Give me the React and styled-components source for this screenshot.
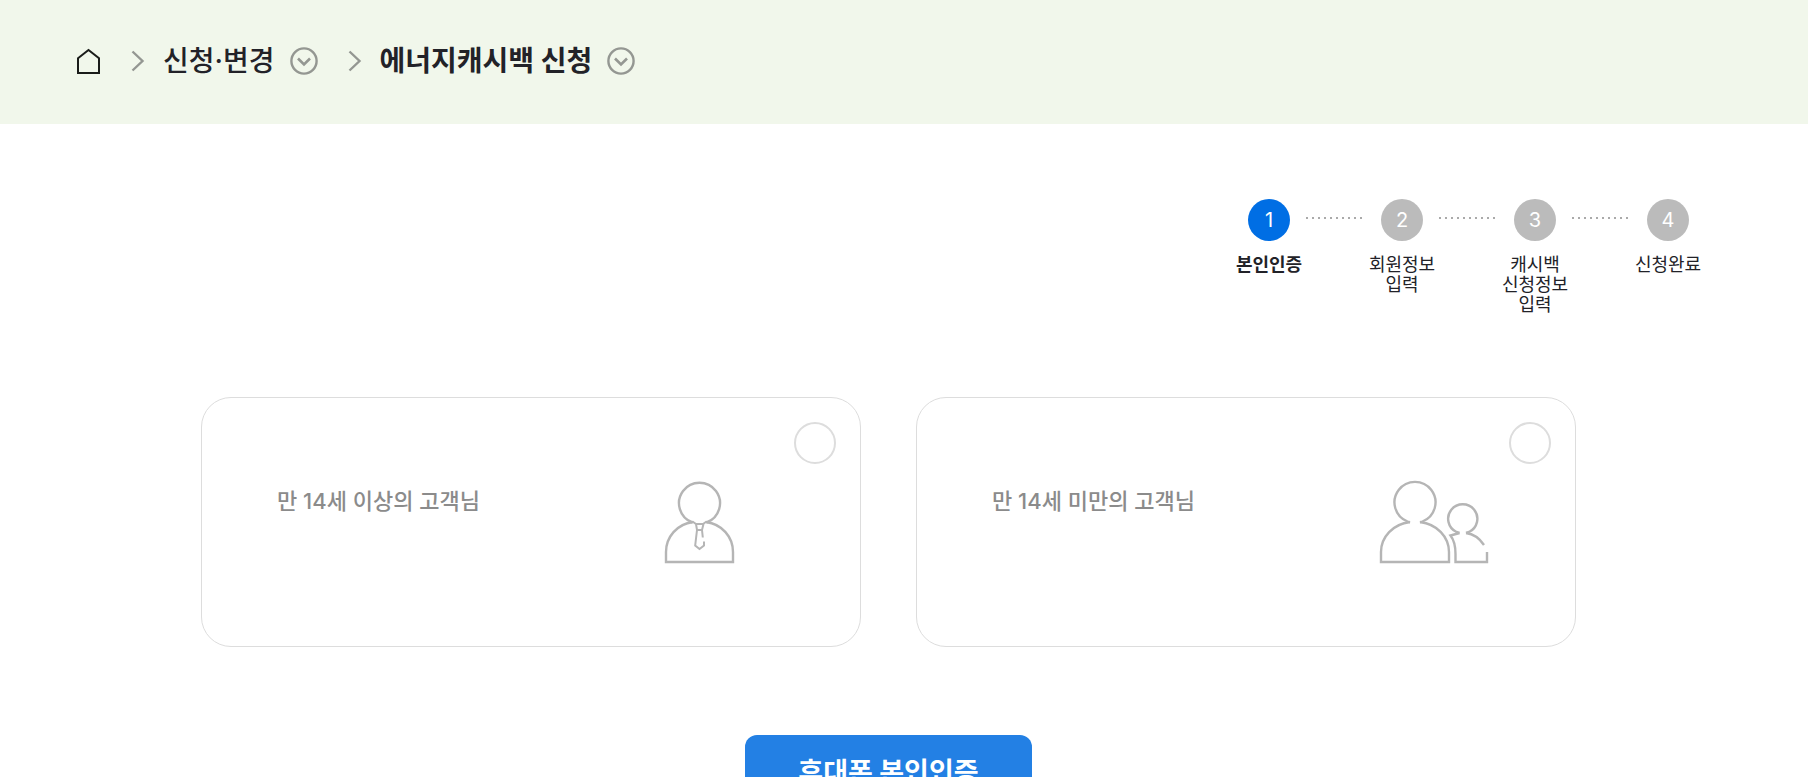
import React, { useState } from 'react'
import styled, { createGlobalStyle, css } from 'styled-components'

const steps = ['본인인증', '회원정보 입력', '캐시백 신청정보 입력', '신청완료']

const HomeIcon = () => (
  <svg width="25" height="27" viewBox="0 0 25 27" fill="none" stroke="#1a1c19" strokeWidth="2">
    <path d="M2 10.2 12.5 2 23 10.2V25H2Z" />
  </svg>
)

const ArrowIcon = () => (
  <svg width="14" height="22" viewBox="0 0 14 22" fill="none" stroke="#949792" strokeWidth="2.4">
    <path d="M1.5 1.5 11.5 11 1.5 20.5" />
  </svg>
)

const OpenIcon = () => (
  <svg width="28" height="28" viewBox="0 0 28 28" fill="none" stroke="#949792" strokeWidth="2.4">
    <circle cx="14" cy="14" r="12.6" />
    <path d="M8 11.5 14 17.5 20 11.5" strokeWidth="2.6" />
  </svg>
)

const AdultIcon = () => (
  <svg width="110" height="84" viewBox="0 0 110 84" fill="none" stroke="#b5b5b5" strokeWidth="2.4">
    <path d="M28.5 42.5A20.5 20.5 0 1 1 42.5 42.5" />
    <path d="M29 42C13 44 2 57 2 72V82H69V72C69 57 58 44 42 42" />
    <path d="M28.5 41.5 32 44H39L42.500 41.500M32 44 33 50H38L39.500 44M33 50 31.200 65.500 35.500 69 40 65.500V61.500M38 50 38.800 57.500" strokeWidth="2" />
  </svg>
)

const FamilyIcon = () => (
  <svg width="110" height="84" viewBox="0 0 110 84" fill="none" stroke="#b5b5b5" strokeWidth="2.4">
    <path d="M31 42.500 28.500 41.500A20.500 20.500 0 1 1 43.500 41.500L41 42.500" />
    <path d="M31 42C14 44 2 57 2 72V82H70V72C70 57 58 44 41 42" />
    <path d="M80.500 53 77.500 52A14.600 14.600 0 1 1 90 52L87 53" />
    <path d="M80.500 53 71.500 55.500C75 60 76.500 66 76.500 74V82H108V72M87 53C95 54 101 59 105 65" />
  </svg>
)

const customers = [
  { id: 'over14', text: '만 14세 이상의 고객님', Icon: AdultIcon },
  { id: 'under14', text: '만 14세 미만의 고객님', Icon: FamilyIcon },
]

export default function App() {
  const [customer, setCustomer] = useState('')

  return (
    <>
      <GlobalStyle />
      <Header>
        <Breadcrumb aria-label="breadcrumb">
          <HomeLink href="#" aria-label="홈">
            <HomeIcon />
          </HomeLink>
          <Crumb>
            <ArrowIcon />
            <CrumbButton type="button">
              신청·변경
              <OpenIcon />
            </CrumbButton>
          </Crumb>
          <Crumb>
            <ArrowIcon />
            <CrumbButton type="button" $current>
              에너지캐시백 신청
              <OpenIcon />
            </CrumbButton>
          </Crumb>
        </Breadcrumb>
      </Header>

      <Main>
        <Steps>
          {steps.map((label, i) => (
            <Step key={label} $active={i === 0}>
              <StepNumber $active={i === 0}>{i + 1}</StepNumber>
              <StepLabel>{label}</StepLabel>
            </Step>
          ))}
        </Steps>

        <Cards>
          {customers.map(({ id, text, Icon }) => (
            <Card key={id}>
              <CardText>{text}</CardText>
              <Icon />
              <CardRadio
                name="customer"
                value={id}
                checked={customer === id}
                onChange={() => setCustomer(id)}
              />
            </Card>
          ))}
        </Cards>

        <SubmitButton type="button">휴대폰 본인인증</SubmitButton>
      </Main>
    </>
  )
}

const GlobalStyle = createGlobalStyle`
  * {
    box-sizing: border-box;
  }
  body {
    margin: 0;
    background: #fff;
    color: #222228;
    font-family: Inter, "Noto Sans CJK KR", sans-serif;
    word-break: keep-all;
  }
  button {
    padding: 0;
    border: 0;
    background: none;
    color: inherit;
    font-family: inherit;
    cursor: pointer;
  }
  svg {
    display: block;
    flex-shrink: 0;
  }
`

const Header = styled.header`
  padding: 41px 76px 43px;
  background: #f1f7eb;
`

const Breadcrumb = styled.nav`
  display: flex;
  align-items: center;
  gap: 30px;
`

const HomeLink = styled.a`
  display: block;
`

const Crumb = styled.div`
  display: flex;
  align-items: center;
  gap: 18px;
`

const CrumbButton = styled.button`
  display: flex;
  align-items: center;
  gap: 15px;
  font-size: 28px;
  line-height: 40px;
  font-weight: ${(p) => (p.$current ? 700 : 500)};
`

const Main = styled.main`
  display: flex;
  flex-direction: column;
  align-items: center;
  padding: 75px 106px 80px 75px;
`

const Steps = styled.ol`
  display: flex;
  align-self: flex-end;
  gap: 65px;
  margin: 0 0 82px;
  padding: 0;
  list-style: none;
`

const Step = styled.li`
  position: relative;
  display: flex;
  flex-direction: column;
  align-items: center;
  gap: 14px;
  width: 68px;
  font-weight: ${(p) => (p.$active ? 700 : 400)};

  /* dotted line to the next step */
  &:not(:last-child)::after {
    content: '';
    position: absolute;
    top: 18px;
    left: 71px;
    width: 60px;
    height: 2px;
    background: repeating-linear-gradient(to right, #aaa 0 2px, transparent 2px 6px);
  }
`

const StepNumber = styled.span`
  display: grid;
  place-items: center;
  width: 42px;
  height: 42px;
  border-radius: 50%;
  background: ${(p) => (p.$active ? '#006ee4' : '#bbb')};
  color: #fff;
  font-size: 20px;
  font-weight: 400;
`

const StepLabel = styled.span`
  font-size: 18px;
  line-height: 20px;
  text-align: center;
`

const Cards = styled.div`
  display: grid;
  grid-template-columns: 1fr 1fr;
  gap: 55px;
  width: 100%;
  max-width: 1375px;
  margin-bottom: 88px;
`

const Card = styled.label`
  position: relative;
  display: flex;
  align-items: center;
  justify-content: space-between;
  height: 250px;
  padding: 0 86px 0 75px;
  border: 1px solid #ddd;
  border-radius: 30px;
  cursor: pointer;
`

const CardText = styled.span`
  padding-bottom: 42px;
  color: #8b8b8b;
  font-size: 22px;
  line-height: 32px;
  font-weight: 500;
`

const CardRadio = styled.input.attrs({ type: 'radio' })`
  position: absolute;
  top: 24px;
  right: 24px;
  width: 42px;
  height: 42px;
  margin: 0;
  border: 2px solid #ddd;
  border-radius: 50%;
  appearance: none;
  cursor: pointer;

  ${(p) =>
    p.checked &&
    css`
      border: 12px solid #2380e4;
    `}
`

const SubmitButton = styled.button`
  min-width: 287px;
  height: 70px;
  padding: 0 48px;
  border-radius: 12px;
  background: #2380e4;
  color: #fff;
  font-size: 27px;
  font-weight: 700;
`
